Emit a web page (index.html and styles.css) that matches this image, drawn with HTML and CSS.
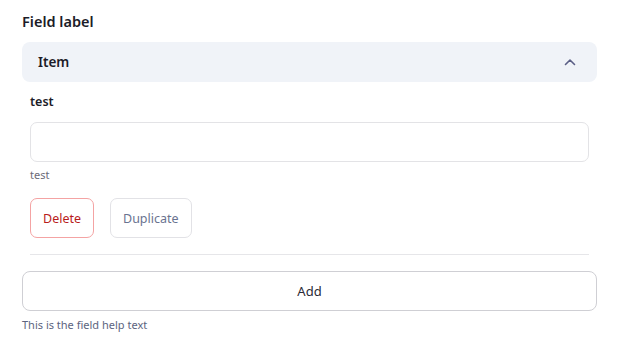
FILE: index.html
```html
<!DOCTYPE html>
<html>
<head>
<meta charset="utf-8">
<link rel="stylesheet" href="styles.css">
</head>
<body>
<div class="field">
  <div class="field-label">Field label</div>
  <div class="item">
    <div class="item-header">
      <span class="item-title">Item</span>
      <svg class="chevron" width="12" height="8" viewBox="0 0 12 8"><path d="M1.5 6.5 L6 2 L10.5 6.5" fill="none" stroke="#5b5f86" stroke-width="1.6" stroke-linecap="round" stroke-linejoin="round"/></svg>
    </div>
    <div class="item-body">
      <div class="sub-label">test</div>
      <input class="text-input" type="text">
      <div class="sub-help">test</div>
      <div class="actions">
        <button class="btn btn-delete">Delete</button>
        <button class="btn btn-dup">Duplicate</button>
      </div>
      <div class="divider"></div>
    </div>
  </div>
  <button class="btn-add">Add</button>
  <div class="help">This is the field help text</div>
</div>
</body>
</html>
```
FILE: styles.css
```css
* { box-sizing: border-box; }
body {
  margin: 0;
  padding: 11px 21px 0 22px;
  font-family: "Noto Sans", "Open Sans", sans-serif;
  background: #fff;
  color: #1f1f2b;
}
.field-label {
  font-size: 14.5px;
  font-weight: 600;
  line-height: 20px;
  color: #1c1c28;
}
.item { margin-top: 11px; }
.item-header {
  height: 40px;
  background: #f0f3f8;
  border-radius: 8px;
  display: flex;
  align-items: center;
  justify-content: space-between;
  padding: 0 21px 0 16px;
}
.item-title {
  font-size: 13.5px;
  font-weight: 600;
  color: #1c1c28;
}
.chevron { display: block; }
.item-body {
  padding: 0 8px;
}
.sub-label {
  margin-top: 10px;
  font-size: 12.5px;
  font-weight: 600;
  line-height: 20px;
  color: #1c1c28;
}
.text-input {
  display: block;
  width: 100%;
  height: 40px;
  margin-top: 10px;
  border: 1px solid #e3e3e6;
  border-radius: 7px;
  background: #fff;
  outline: none;
}
.sub-help {
  margin-top: 5px;
  font-size: 11px;
  line-height: 16px;
  color: #6b6b78;
}
.actions {
  margin-top: 15px;
  display: flex;
  gap: 16px;
}
.btn {
  height: 40px;
  padding: 0 12px;
  border-radius: 7px;
  background: #fff;
  font-family: inherit;
  font-size: 12.5px;
}
.btn-delete {
  border: 1px solid #f4a3a3;
  color: #b81c1c;
}
.btn-dup {
  border: 1px solid #e2e2e6;
  color: #6a7390;
}
.divider {
  margin-top: 16px;
  height: 1px;
  background: #e6e6e9;
}
.btn-add {
  display: block;
  width: 100%;
  height: 40px;
  margin-top: 16px;
  border: 1px solid #cfcfd4;
  border-radius: 8px;
  background: #fff;
  font-family: inherit;
  font-size: 13px;
  color: #2a2a36;
}
.help {
  margin-top: 6px;
  font-size: 11px;
  line-height: 16px;
  color: #5c6480;
}
```
